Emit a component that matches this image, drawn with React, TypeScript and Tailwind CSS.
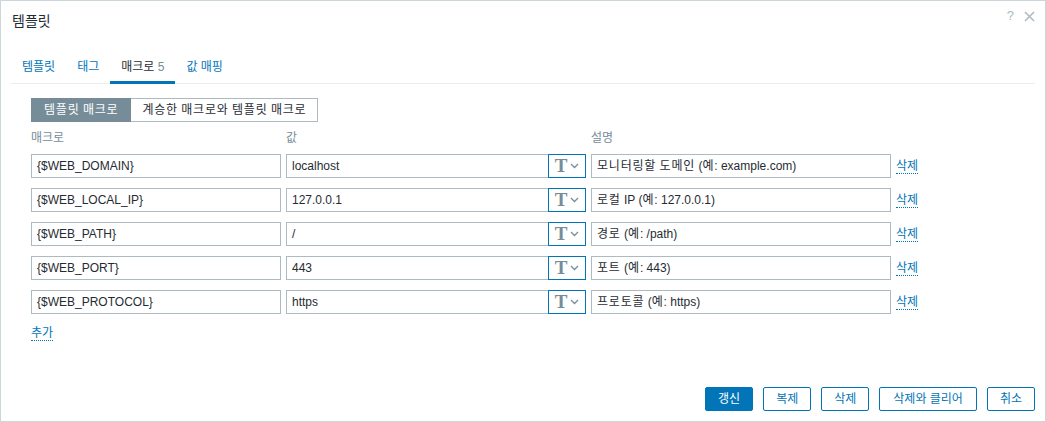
import React from "react";

const rows = [
  { m: "{$WEB_DOMAIN}", v: "localhost", d: "모니터링할 도메인 (예: example.com)" },
  { m: "{$WEB_LOCAL_IP}", v: "127.0.0.1", d: "로컬 IP (예: 127.0.0.1)" },
  { m: "{$WEB_PATH}", v: "/", d: "경로 (예: /path)" },
  { m: "{$WEB_PORT}", v: "443", d: "포트 (예: 443)" },
  { m: "{$WEB_PROTOCOL}", v: "https", d: "프로토콜 (예: https)" },
];

function K({ t }: { t: string }) {
  const parts = t.split(/([\uac00-\ud7a3]+)/);
  return (
    <span>
      {parts.map((p, i) =>
        /[\uac00-\ud7a3]/.test(p) ? (
          <span key={i} className="tracking-[0.8px]">
            {p}
          </span>
        ) : (
          <React.Fragment key={i}>{p}</React.Fragment>
        )
      )}
    </span>
  );
}

function Chevron() {
  return (
    <svg width="9" height="6" viewBox="0 0 9 6" className="shrink-0">
      <path d="M1 1 L4.5 4.5 L8 1" fill="none" stroke="#768d99" strokeWidth="1.3" />
    </svg>
  );
}

export default function App() {
  const font = { fontFamily: '"Liberation Sans", "Noto Sans CJK KR", Arial, sans-serif' };
  return (
    <div
      className="w-[1046px] h-[422px] border border-[#ccd5d9] bg-white flex flex-col text-[12px] leading-[16px] text-[#1f2c33]"
      style={font}
    >
      {/* header */}
      <div className="flex justify-between h-[40px]">
        <div className="pl-[11px] pt-[11px] text-[14px] leading-[18px] text-[#1f2c33]">템플릿</div>
        <div className="flex items-start gap-[10px] pr-[10px] pt-[6px] text-[#acbbc2]">
          <span className="text-[13px] leading-[18px]">?</span>
          <svg width="11" height="11" viewBox="0 0 11 11" className="mt-[4px]">
            <path d="M1 1 L10 10 M10 1 L1 10" stroke="#acbbc2" strokeWidth="1.6" />
          </svg>
        </div>
      </div>

      {/* tabs */}
      <div className="mx-[10px] mt-[9px] flex border-b border-[#ebeef0] h-[34px]">
        <div className="px-[11px] pt-[9px] text-[#0275b8]">템플릿</div>
        <div className="px-[11px] pt-[9px] text-[#0275b8]">태그</div>
        <div className="px-[11px] pt-[9px] h-[34px] border-b-[3px] border-[#0275b8] text-[#1f2c33]">
          매크로 <span className="text-[#768d99]">5</span>
        </div>
        <div className="px-[11px] pt-[9px] text-[#0275b8]">값 매핑</div>
      </div>

      {/* content */}
      <div className="pl-[30px] pt-[14px] flex flex-col">
        <div className="flex">
          <div className="h-[24px] px-[12px] flex items-center bg-[#768d99] text-white border border-[#768d99]">
            <K t="템플릿 매크로" />
          </div>
          <div className="h-[24px] px-[11px] flex items-center bg-white border border-l-0 border-[#acbbc2] text-[#1f2c33]">
            <K t="계승한 매크로와 템플릿 매크로" />
          </div>
        </div>

        <div className="flex gap-[5px] mt-[8px] h-[16px] text-[#768d99]">
          <div className="w-[250px]">매크로</div>
          <div className="w-[300px]">값</div>
          <div>설명</div>
        </div>

        <div className="flex flex-col gap-[10px] mt-[8px]">
          {rows.map((r) => (
            <div key={r.m} className="flex items-center h-[24px]">
              <div className="w-[250px] h-[24px] border border-[#acbbc2] px-[5px] flex items-center">{r.m}</div>
              <div className="ml-[5px] w-[263px] h-[24px] border border-[#acbbc2] px-[5px] flex items-center">{r.v}</div>
              <div className="-ml-px w-[38px] h-[24px] border border-[#0275b8] flex items-center justify-center gap-[3px]">
                <span
                  className="text-[19px] leading-[20px] font-bold text-[#768d99]"
                  style={{ fontFamily: '"Liberation Serif", "DejaVu Serif", serif' }}
                >
                  T
                </span>
                <Chevron />
              </div>
              <div className="ml-[5px] w-[300px] h-[24px] border border-[#acbbc2] px-[5px] flex items-center">
                <K t={r.d} />
              </div>
              <span className="ml-[5px] text-[#0275b8] border-b border-dotted border-[#0275b8] leading-[14px]">삭제</span>
            </div>
          ))}
        </div>

        <div className="mt-[12px] flex">
          <span className="text-[#0275b8] border-b border-dotted border-[#0275b8] leading-[14px]">추가</span>
        </div>
      </div>

      <div className="flex-1" />

      {/* footer */}
      <div className="flex justify-end gap-[10px] pr-[10px] pb-[10px]">
        <div className="h-[24px] px-[12px] flex items-center bg-[#0275b8] text-white border border-[#0275b8] rounded-[2px]">갱신</div>
        <div className="h-[24px] px-[12px] flex items-center border border-[#0275b8] text-[#0275b8] rounded-[2px]">복제</div>
        <div className="h-[24px] px-[12px] flex items-center border border-[#0275b8] text-[#0275b8] rounded-[2px]">삭제</div>
        <div className="h-[24px] px-[13px] flex items-center border border-[#0275b8] text-[#0275b8] rounded-[2px]">삭제와 클리어</div>
        <div className="h-[24px] px-[12px] flex items-center border border-[#0275b8] text-[#0275b8] rounded-[2px]">취소</div>
      </div>
    </div>
  );
}
